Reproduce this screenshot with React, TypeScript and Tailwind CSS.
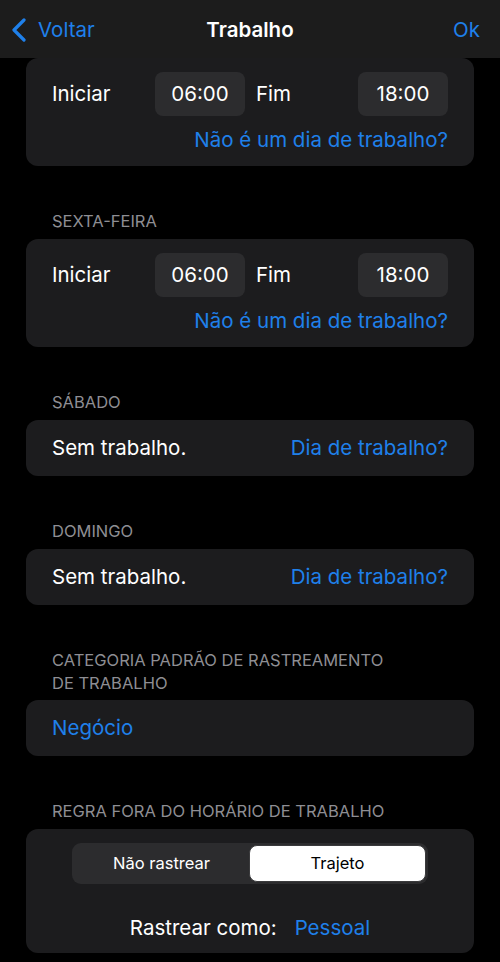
import React from "react";

const font = { fontFamily: "Inter, 'Noto Sans', sans-serif" };

function NavBar() {
  return (
    <div className="relative flex h-[58px] items-center justify-between bg-[#1c1c1c] pl-[11px] pr-[20px] pt-[2px]">
      <div className="flex items-center gap-[11px] text-[20.5px] text-[#1f80ea]">
        <svg width="16" height="24" viewBox="0 0 16 24" fill="none">
          <path d="M13 2 L3 12 L13 22" stroke="#1f80ea" strokeWidth="3.2" strokeLinecap="round" strokeLinejoin="round" />
        </svg>
        <span>Voltar</span>
      </div>
      <div className="pointer-events-none absolute left-0 right-0 text-center text-[20.5px] font-semibold text-white">Trabalho</div>
      <div className="text-[20.5px] text-[#1f80ea]">Ok</div>
    </div>
  );
}

function Header({ children, className = "leading-[20px] pb-[8px]" }: { children: React.ReactNode; className?: string }) {
  return <div className={`px-[52px] text-[16.5px] uppercase text-[#8e8e93] ${className}`}>{children}</div>;
}

function Card({ children, className = "" }: { children: React.ReactNode; className?: string }) {
  return <div className={`mx-[26px] rounded-[12px] bg-[#1c1c1e] ${className}`}>{children}</div>;
}

function TimePill({ value }: { value: string }) {
  return (
    <div className="flex h-[44px] w-[90px] items-center justify-center rounded-[8px] bg-[#2c2c2e] text-[20.5px] text-white">
      {value}
    </div>
  );
}

function WorkDay() {
  return (
    <Card className="px-[26px] pt-[14px] pb-[14px]">
      <div className="flex items-center">
        <span className="w-[103px] text-[20.5px] text-white">Iniciar</span>
        <TimePill value="06:00" />
        <span className="ml-[11px] flex-1 text-[20.5px] text-white">Fim</span>
        <TimePill value="18:00" />
      </div>
      <div className="mt-[12px] text-right text-[20.5px] leading-[24px] text-[#1f80ea]">Não é um dia de trabalho?</div>
    </Card>
  );
}

function OffDay() {
  return (
    <Card className="flex h-[56px] items-center justify-between px-[26px]">
      <span className="text-[20.5px] text-white">Sem trabalho.</span>
      <span className="text-[20.5px] text-[#1f80ea]">Dia de trabalho?</span>
    </Card>
  );
}

export default function App() {
  return (
    <div className="min-h-[962px] w-[500px] overflow-hidden bg-black" style={font}>
      <NavBar />
      <WorkDay />
      <div className="mt-[45px]">
        <Header>Sexta-feira</Header>
        <WorkDay />
      </div>
      <div className="mt-[45px]">
        <Header>Sábado</Header>
        <OffDay />
      </div>
      <div className="mt-[45px]">
        <Header>Domingo</Header>
        <OffDay />
      </div>
      <div className="mt-[44px]">
        <Header className="leading-[23px] pb-[5px]">
          Categoria padrão de rastreamento
          <br />
          de trabalho
        </Header>
        <Card className="flex h-[56px] items-center px-[26px]">
          <span className="text-[20.5px] text-[#1f80ea]">Negócio</span>
        </Card>
      </div>
      <div className="mt-[45px]">
        <Header>Regra fora do horário de trabalho</Header>
        <Card className="pt-[14px] pb-[13px]">
          <div className="mx-auto flex h-[41px] w-[356px] rounded-[9px] bg-[#2c2c2e] p-[2px]">
            <div className="flex flex-1 items-center justify-center text-[16.5px] text-white">Não rastrear</div>
            <div className="flex flex-1 items-center justify-center rounded-[8px] border border-[#3a3a3c] bg-white text-[16.5px] text-black">
              Trajeto
            </div>
          </div>
          <div className="mt-[32px] flex justify-center gap-[18px] text-[20.5px] leading-[24px]">
            <span className="text-white">Rastrear como:</span>
            <span className="text-[#1f80ea]">Pessoal</span>
          </div>
        </Card>
      </div>
    </div>
  );
}
